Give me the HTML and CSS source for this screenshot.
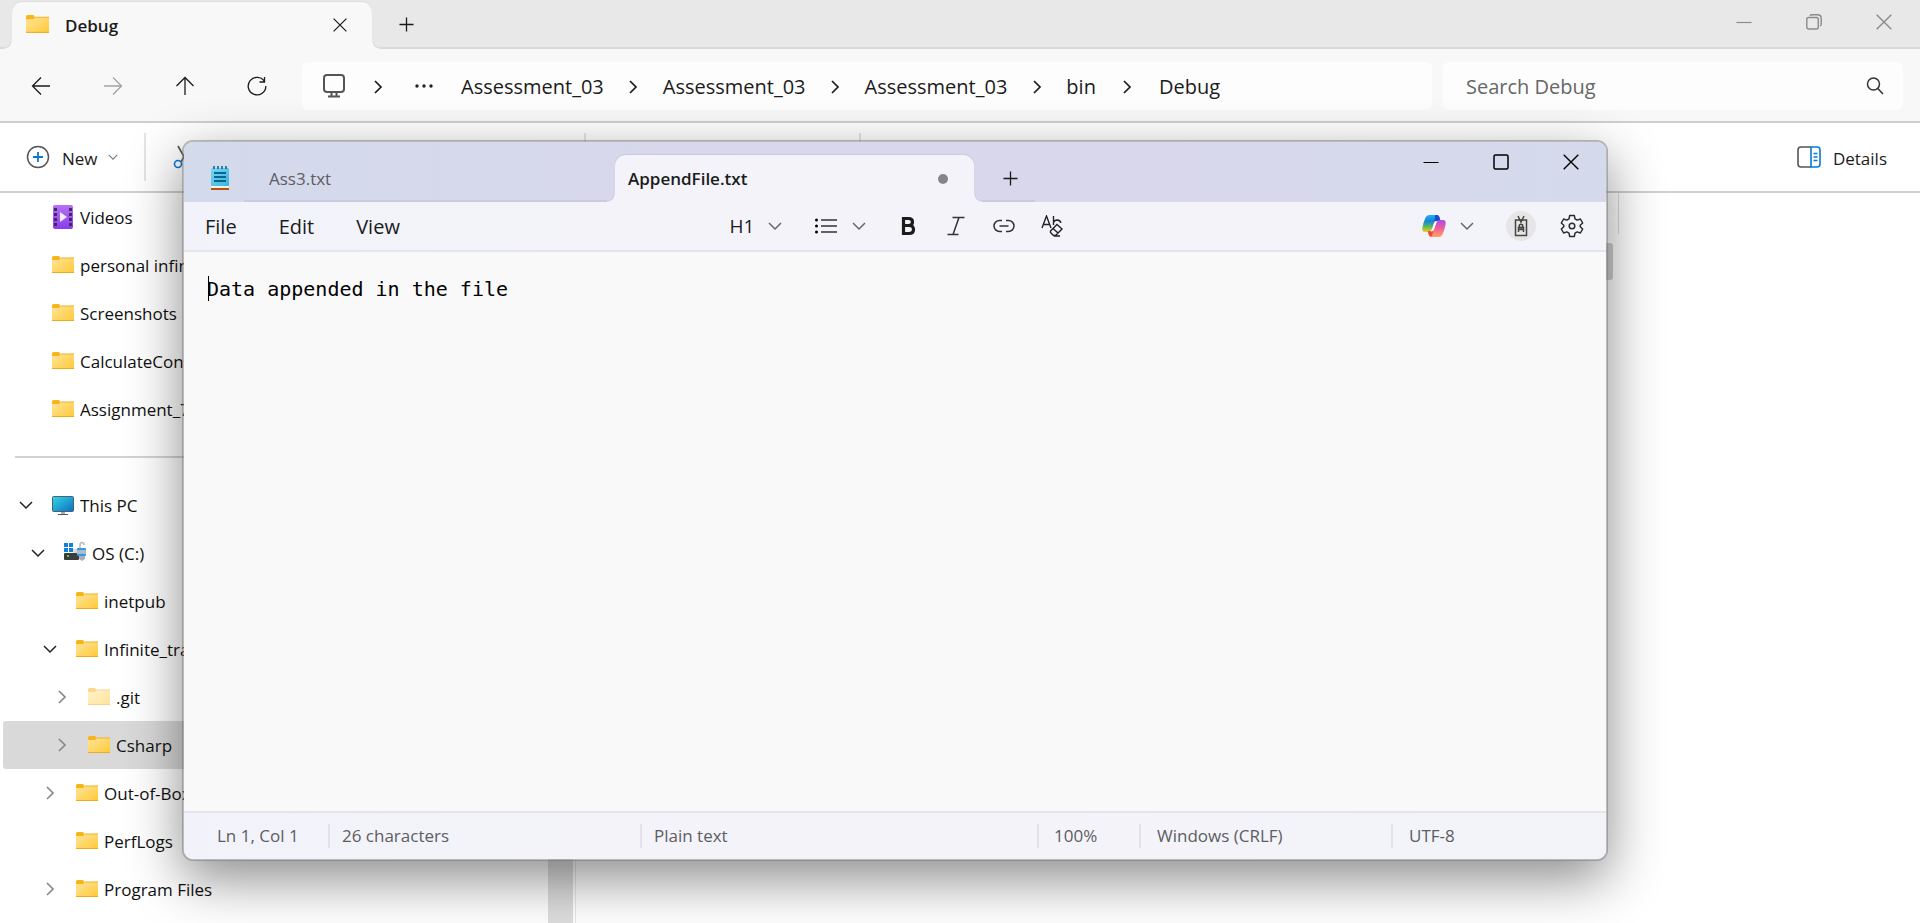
FILE: index.html
```html
<!DOCTYPE html>
<html lang="en">
<head>
<meta charset="utf-8">
<title>Debug</title>
<link rel="stylesheet" href="styles.css">
</head>
<body>
<svg class="defs" aria-hidden="true">
  <defs>
    <linearGradient id="folder-fill" x1="0" y1="0" x2="1" y2="1"><stop offset="0" stop-color="#ffe59a"/><stop offset="1" stop-color="#ffc937"/></linearGradient>
    <linearGradient id="video-fill" x1="0" y1="0" x2="0" y2="1"><stop offset="0" stop-color="#b573f3"/><stop offset="1" stop-color="#8a3ce8"/></linearGradient>
    <linearGradient id="screen-fill" x1="0" y1="0" x2="1" y2="1"><stop offset="0" stop-color="#35d6e4"/><stop offset="1" stop-color="#0a6fc2"/></linearGradient>
    <linearGradient id="pad-fill" x1="0" y1="0" x2="1" y2="1"><stop offset="0" stop-color="#7ad6f2"/><stop offset="1" stop-color="#3cb4dc"/></linearGradient>
    <linearGradient id="cop-a" x1="0" y1="0" x2="0" y2="1"><stop offset="0" stop-color="#1fb2f5"/><stop offset=".35" stop-color="#1483dc"/><stop offset=".65" stop-color="#4fb765"/><stop offset="1" stop-color="#f5cf12"/></linearGradient>
    <linearGradient id="cop-b" x1="0" y1="0" x2="0" y2="1"><stop offset="0" stop-color="#a64be8"/><stop offset=".5" stop-color="#f0609a"/><stop offset="1" stop-color="#ffa25c"/></linearGradient>
    <symbol id="folder" viewBox="0 0 22 18"><path d="M0 1.500Q0 0 1.500 0H7L8.500 2V5H0Z" fill="#f9b41c"/><path d="M0 4H7L9 2H21Q22 2 22 3V17H0Z" fill="url(#folder-fill)"/><path d="M9 1.500H22V2.500H8Z" fill="#efb02a"/><path d="M0 16H22V17H0Z" fill="#eda91f"/></symbol>
    <symbol id="down" viewBox="0 0 14 14"><path d="M1 4 7 10 13 4" fill="none" stroke="currentColor" stroke-width="1.500"/></symbol>
    <symbol id="right" viewBox="0 0 14 14"><path d="M4 1 10 7 4 13" fill="none" stroke="currentColor" stroke-width="1.700"/></symbol>
    <symbol id="cross" viewBox="0 0 16 16"><path d="M.7.7 15.300 15.300M15.300.7.7 15.300" fill="none" stroke="currentColor" stroke-width="1.400"/></symbol>
    <symbol id="plus" viewBox="0 0 16 16"><path d="M8 .5V15.500M.5 8H15.500" fill="none" stroke="currentColor" stroke-width="1.400"/></symbol>
    <symbol id="minus" viewBox="0 0 16 16"><path d="M.5 8.500H15.500" fill="none" stroke="currentColor" stroke-width="1.200"/></symbol>
  </defs>
</svg>

<div class="explorer">
  <header class="ex-tabs">
    <div class="ex-tab">
      <svg class="ex-tab-icon"><use href="#folder"/></svg>
      <span class="ex-tab-name">Debug</span>
      <button class="icon-btn small" aria-label="Close tab"><svg class="i14"><use href="#cross"/></svg></button>
    </div>
    <button class="icon-btn ex-add" aria-label="New tab"><svg class="i15"><use href="#plus"/></svg></button>
    <div class="ex-caption">
      <button class="icon-btn cap" aria-label="Minimize"><svg class="i16"><use href="#minus"/></svg></button>
      <button class="icon-btn cap" aria-label="Restore"><svg class="i16" viewBox="0 0 16 16" fill="none" stroke="currentColor" stroke-width="1.400"><rect x=".8" y="3.500" width="11.500" height="11.500" rx="2"/><path d="M4 1.800Q4.600.8 6 .8H11.500Q15.200.8 15.200 4.500V10Q15.200 11.500 14.200 12"/></svg></button>
      <button class="icon-btn cap" aria-label="Close"><svg class="i16"><use href="#cross"/></svg></button>
    </div>
  </header>

  <nav class="ex-nav" aria-label="Location">
    <div class="ex-moves">
      <button class="icon-btn move" aria-label="Back"><svg class="i20" viewBox="0 0 20 20"><path d="M19 10H1.500M10 1.500 1.500 10 10 18.500"/></svg></button>
      <button class="icon-btn move off" aria-label="Forward"><svg class="i20" viewBox="0 0 20 20"><path d="M1 10H18.500M10 1.500 18.500 10 10 18.500"/></svg></button>
      <button class="icon-btn move" aria-label="Up"><svg class="i20" viewBox="0 0 20 20"><path d="M10 19V1.500M1.500 10 10 1.500 18.500 10"/></svg></button>
      <button class="icon-btn move" aria-label="Refresh"><svg class="i20" viewBox="0 0 20 20"><path d="M17.500 5.500A8.800 8.800 0 1 0 18.800 10M17.500 1V6H12.500"/></svg></button>
    </div>
    <ol class="crumbs">
      <li><button class="icon-btn pc" aria-label="This device"><svg class="i24" viewBox="0 0 24 24" fill="none" stroke="#555" stroke-width="2"><rect x="2" y="1" width="20" height="17" rx="3"/><path d="M9.500 18V22M14.500 18V22M6 22.500H18"/></svg></button></li>
      <li class="sep wide"><svg class="i14"><use href="#right"/></svg></li>
      <li><button class="icon-btn more" aria-label="More"><svg class="dots" viewBox="0 0 18 4"><circle cx="2" cy="2" r="1.700"/><circle cx="9" cy="2" r="1.700"/><circle cx="16" cy="2" r="1.700"/></svg></button></li>
      <li><a href="#">Assessment_03</a></li>
      <li class="sep"><svg class="i14"><use href="#right"/></svg></li>
      <li><a href="#">Assessment_03</a></li>
      <li class="sep"><svg class="i14"><use href="#right"/></svg></li>
      <li><a href="#">Assessment_03</a></li>
      <li class="sep"><svg class="i14"><use href="#right"/></svg></li>
      <li><a href="#">bin</a></li>
      <li class="sep wide"><svg class="i14"><use href="#right"/></svg></li>
      <li><a href="#">Debug</a></li>
    </ol>
    <label class="search">
      <input type="search" placeholder="Search Debug" aria-label="Search Debug">
      <svg class="i18" viewBox="0 0 18 18" fill="none" stroke="#333" stroke-width="1.500"><circle cx="7.500" cy="7" r="6"/><path d="M11.800 11.500 17 17"/></svg>
    </label>
  </nav>

  <div class="ex-tools">
    <button class="tool-btn"><svg class="i24" viewBox="0 0 24 24" fill="none"><circle cx="12" cy="12" r="10.500" stroke="#555" stroke-width="1.500"/><path d="M12 7V17M7 12H17" stroke="#0a78d4" stroke-width="1.800"/></svg><span class="low">New</span><svg class="i10 faint"><use href="#down"/></svg></button>
    <span class="rule first"></span>
    <button class="icon-btn cut" aria-label="Cut"><svg class="i24" viewBox="0 0 24 24" fill="none" stroke-width="1.600"><path d="M6 1 15 17M18 1 9 17" stroke="#555"/><circle cx="6" cy="19" r="3.500" stroke="#0a78d4"/><circle cx="18" cy="19" r="3.500" stroke="#0a78d4"/></svg></button>
    <span class="rule second"></span>
    <span class="rule third"></span>
    <button class="tool-btn details"><svg class="i24" viewBox="0 0 24 24" fill="none" stroke-width="1.600"><path d="M14 2H4Q1 2 1 5V19Q1 22 4 22H14" stroke="#555"/><path d="M14 2H20Q23 2 23 5V19Q23 22 20 22H14ZM16.500 8.500H20.500M16.500 12H20.500M16.500 15.500H20.500" stroke="#0a78d4"/></svg><span class="low">Details</span></button>
  </div>

  <div class="ex-body">
    <aside class="side">
      <ul class="tree">
        <li class="row l0"><span class="arrow"></span><svg class="ico tall" viewBox="0 0 22 24"><rect x="1" width="20" height="24" rx="2" fill="url(#video-fill)"/><path d="M2 3h3v3H2zM2 8h3v3H2zM2 13h3v3H2zM2 18h3v3H2zM17 3h3v3h-3zM17 8h3v3h-3zM17 13h3v3h-3zM17 18h3v3h-3z" fill="#43266e"/><path d="M8 7V17L15 12Z" fill="#f4ecff"/></svg><span>Videos</span></li>
        <li class="row l0"><span class="arrow"></span><svg class="ico"><use href="#folder"/></svg><span>personal infinite</span></li>
        <li class="row l0"><span class="arrow"></span><svg class="ico"><use href="#folder"/></svg><span>Screenshots</span></li>
        <li class="row l0"><span class="arrow"></span><svg class="ico"><use href="#folder"/></svg><span>CalculateConc</span></li>
        <li class="row l0"><span class="arrow"></span><svg class="ico"><use href="#folder"/></svg><span>Assignment_7</span></li>
        <li class="split"></li>
        <li class="row l0"><span class="arrow open"><svg class="i14"><use href="#down"/></svg></span><svg class="ico tall" viewBox="0 0 22 24"><rect x=".5" y="3.500" width="21" height="15" rx="1" fill="url(#screen-fill)" stroke="#4a6272"/><path d="M9 19H13V21H9Z" fill="#a6b0b8"/><path d="M6 21H16V22H6Z" fill="#4c5964"/></svg><span>This PC</span></li>
        <li class="row l1"><span class="arrow open"><svg class="i14"><use href="#down"/></svg></span><svg class="ico tall" viewBox="0 0 22 24"><path d="M0 2h4v4H0zM5 2h4v4H5zM0 7h4v4H0zM5 7h4v4H5z" fill="#1182dc"/><path d="M9 8H14V12H9Z" fill="#d9dde0"/><rect y="12" width="15" height="7" rx="1" fill="#3c3c3c"/><rect x="3" y="14" width="2" height="2" fill="#2de02d"/><path d="M16 7V4Q16 1.500 18 1.500 20 1.500 20 4" fill="none" stroke="#b4bbc2" stroke-width="1.500"/><rect x="13" y="7" width="9" height="8" rx="1" fill="#3099e0"/><rect x="13" y="9" width="9" height="4" fill="#a9bccb"/><path d="M15 15H21V18L18 20 15 18Z" fill="#a8b1b9"/></svg><span>OS (C:)</span></li>
        <li class="row l2"><span class="arrow"></span><svg class="ico"><use href="#folder"/></svg><span>inetpub</span></li>
        <li class="row l2"><span class="arrow open"><svg class="i14"><use href="#down"/></svg></span><svg class="ico"><use href="#folder"/></svg><span>Infinite_trai</span></li>
        <li class="row l3"><span class="arrow"><svg class="i14"><use href="#right"/></svg></span><svg class="ico pale"><use href="#folder"/></svg><span>.git</span></li>
        <li class="row l3 picked"><span class="arrow"><svg class="i14"><use href="#right"/></svg></span><svg class="ico"><use href="#folder"/></svg><span>Csharp</span></li>
        <li class="row l2"><span class="arrow"><svg class="i14"><use href="#right"/></svg></span><svg class="ico"><use href="#folder"/></svg><span>Out-of-Box</span></li>
        <li class="row l2"><span class="arrow"></span><svg class="ico"><use href="#folder"/></svg><span>PerfLogs</span></li>
        <li class="row l2"><span class="arrow"><svg class="i14"><use href="#right"/></svg></span><svg class="ico"><use href="#folder"/></svg><span>Program Files</span></li>
      </ul>
      <div class="side-scroll"></div>
    </aside>
    <main class="files">
      <div class="columns"></div>
      <div class="file-picked"></div>
    </main>
  </div>
</div>

<section class="notepad" aria-label="Notepad">
  <header class="np-title">
    <div class="np-logo"><svg class="pad" viewBox="0 0 18 24"><path d="M0 22H18V24H0Z" fill="#b4530d"/><path d="M0 20H18V22H0Z" fill="#f5f0ea"/><rect y="2" width="18" height="18" rx="1" fill="url(#pad-fill)"/><path d="M3 0V3M7 0V3M11 0V3M15 0V3" stroke="#0c6a92" stroke-width="1.600"/><path d="M3 7H15M3 11H15M3 15H15" stroke="#05678f" stroke-width="2"/></svg></div>
    <div class="np-tabs">
      <button class="np-tab">Ass3.txt</button>
      <button class="np-tab on"><span>AppendFile.txt</span><i class="dot"></i></button>
      <button class="icon-btn np-add" aria-label="New tab"><svg class="i15"><use href="#plus"/></svg></button>
    </div>
    <div class="np-caption">
      <button class="icon-btn" aria-label="Minimize"><svg class="i16"><use href="#minus"/></svg></button>
      <button class="icon-btn" aria-label="Maximize"><svg class="i16" viewBox="0 0 16 16" fill="none" stroke="currentColor" stroke-width="1.500"><rect x="1" y="1" width="14" height="14" rx="1.500"/></svg></button>
      <button class="icon-btn" aria-label="Close"><svg class="i16"><use href="#cross"/></svg></button>
    </div>
  </header>

  <div class="np-menu">
    <div class="menus"><button>File</button><button>Edit</button><button>View</button></div>
    <div class="format">
      <button class="combo heading"><span>H1</span><svg class="i14 grey"><use href="#down"/></svg></button>
      <button class="combo list" aria-label="List"><svg class="i22" viewBox="0 0 22 22"><path d="M6 5H22M6 11H22M6 17H22" stroke="#333" stroke-width="1.400"/><circle cx="1.500" cy="5" r="1.500"/><circle cx="1.500" cy="11" r="1.500"/><circle cx="1.500" cy="17" r="1.500"/></svg><svg class="i14 grey"><use href="#down"/></svg></button>
      <button class="icon-btn fmt" aria-label="Bold"><svg class="i20" viewBox="0 0 20 20"><path d="M5.500 2.500H10.500Q14.500 2.500 14.500 6 14.500 9.500 10.500 9.500H5.500ZM5.500 9.500H11Q15.500 9.500 15.500 13.500 15.500 17.500 11 17.500H5.500Z" fill="none" stroke="#1b1b1b" stroke-width="3.200"/></svg></button>
      <button class="icon-btn fmt" aria-label="Italic"><svg class="i20" viewBox="0 0 20 20"><path d="M6.500 1.500H18.500M1.500 18.500H12.500M13 1.500 7 18.500" fill="none" stroke="#333" stroke-width="1.500"/></svg></button>
      <button class="icon-btn fmt" aria-label="Link"><svg class="i22" viewBox="0 0 22 22"><path d="M9 5.500H6.500A5.500 5.500 0 0 0 6.500 16.500H9M13 5.500H15.500A5.500 5.500 0 0 1 15.500 16.500H13M6.500 11H15.500" fill="none" stroke="#333" stroke-width="1.500"/></svg></button>
      <button class="icon-btn fmt" aria-label="Clear formatting"><svg class="i22" viewBox="0 0 22 22"><path d="M1 13 5.500 1 10 13M2.500 9.500H8.500M12.500 1V10M12.500 7.500Q13.500 5 16 5 19.500 5.200 19.800 8M9.500 16 16 9.500 21 14 14.500 20.500H12.500L9.500 17.500ZM12 13.500 17 18M13 21H19" fill="none" stroke="#222" stroke-width="1.400"/></svg></button>
    </div>
    <div class="extras">
      <button class="combo copilot" aria-label="Copilot"><svg class="i24" viewBox="0 0 24 24"><path d="M7 1H14.500Q17 1 17.500 4L18 7H14.500Q12.500 7 12 9L9.500 16.500Q8.700 18 7 18H3Q0 18 .3 14.500Q1 9 3.500 3.500 4.800 1 7 1Z" fill="url(#cop-a)"/><path d="M13 1H15Q17 1 17.600 3.500L18.500 7H15Q13.500 7 12.500 9Z" fill="#2048cc"/><path d="M17 23H9.500Q7 23 6.500 20L6 17H9.500Q11.500 17 12 15L14.500 7.500Q15.300 6 17 6H21Q24 6 23.700 9.500 23 15 20.500 20.500 19.200 23 17 23Z" fill="url(#cop-b)"/><path d="M6 17H9.500Q11 17 11.800 15.500L9.500 22.800Q7 22.500 6.500 20Z" fill="#ee4a35"/><path d="M12.500 8Q13 7 15.500 7 14 9 11.500 16.500 11 17.500 8.500 17.500 10.500 15.500 12.500 8Z" fill="#fff"/></svg><svg class="i14 grey"><use href="#down"/></svg></button>
      <button class="icon-btn avatar" aria-label="Account"><svg class="i22" viewBox="0 0 22 22" fill="none" stroke="#444" stroke-width="1.500"><rect x="5.500" y="5" width="11" height="15.500"/><path d="M8 1 11 7 14 1M8.500 17V12.500H13.500V17M8.500 14.500H13.500"/><circle cx="11" cy="11" r="1.800"/></svg></button>
      <button class="icon-btn gear" aria-label="Settings"><svg class="i24" viewBox="0 0 24 24" fill="none" stroke="#2b2b2b" stroke-width="1.500" stroke-linejoin="round"><path d="M9.700 1.500H14.300L15 4.800 17.200 6.100 20.400 5 22.700 9 20.200 11.200V12.800L22.700 15 20.400 19 17.200 17.900 15 19.200 14.300 22.500H9.700L9 19.200 6.800 17.900 3.600 19 1.300 15 3.800 12.800V11.200L1.300 9 3.600 5 6.800 6.100 9 4.800Z"/><circle cx="12" cy="12" r="2.800"/></svg></button>
    </div>
  </div>

  <div class="np-edit">
    <textarea aria-label="Text editor" spellcheck="false">Data appended in the file</textarea>
    <span class="caret"></span>
  </div>

  <footer class="np-status">
    <span class="st pos">Ln 1, Col 1</span>
    <span class="st chars">26 characters</span>
    <span class="st kind">Plain text</span>
    <span class="st zoom">100%</span>
    <span class="st eol">Windows (CRLF)</span>
    <span class="st enc">UTF-8</span>
  </footer>
</section>
</body>
</html>
```
FILE: styles.css
```css
* { box-sizing: border-box; }
body {
  margin: 0;
  height: 100vh;
  overflow: hidden;
  background: #fff;
  color: #1b1b1b;
  font: 17px/24px "Open Sans", "Noto Sans", sans-serif;
}
button {
  margin: 0;
  padding: 0;
  border: 0;
  background: none;
  color: inherit;
  font: inherit;
}
a { color: inherit; text-decoration: none; }
ol, ul { margin: 0; padding: 0; list-style: none; }
svg { display: block; flex: none; }
.defs { position: absolute; width: 0; height: 0; }
.i10 { width: 10px; height: 10px; }
.i14 { width: 14px; height: 14px; }
.i15 { width: 15px; height: 15px; }
.i16 { width: 16px; height: 16px; }
.i18 { width: 18px; height: 18px; }
.i20 { width: 20px; height: 20px; }
.i22 { width: 22px; height: 22px; }
.i24 { width: 24px; height: 24px; }
.icon-btn { display: flex; align-items: center; justify-content: center; flex: none; }
.grey { color: #666; }
.faint { color: #777; }

/* Explorer */
.explorer { display: flex; flex-direction: column; height: 100%; }
.ex-tabs {
  display: flex;
  height: 49px;
  padding: 2px 1px 0 12px;
  background: #e8e8e8;
  border-bottom: 2px solid #d9d9d9;
}
.ex-tab {
  position: relative;
  display: flex;
  align-items: center;
  width: 360px;
  height: 47px;
  padding: 0 20px 2px 14px;
  background: #f8f8f8;
  border-radius: 10px 10px 0 0;
  box-shadow: 0 -1px 1px #ddd;
}
.ex-tab::before, .ex-tab::after, .np-tab.on::before, .np-tab.on::after {
  content: "";
  position: absolute;
  bottom: 0;
  width: 8px;
  height: 8px;
}
.ex-tab::before { right: 100%; background: radial-gradient(circle at 0 0, #e8e8e8 6px, #d9d9d9 7px, #f8f8f8 8px); }
.ex-tab::after { left: 100%; background: radial-gradient(circle at 100% 0, #e8e8e8 6px, #d9d9d9 7px, #f8f8f8 8px); }
.ex-tab-icon { width: 23px; height: 19px; }
.ex-tab-name { flex: 1; padding: 2px 0 0 16px; font-size: 17px; font-weight: 600; }
.small { width: 24px; height: 24px; }
.ex-add { width: 68px; }
.ex-caption { display: flex; margin-left: auto; color: #8a8a8a; }
.cap { width: 70px; height: 39px; }

.ex-nav {
  display: flex;
  align-items: center;
  height: 74px;
  padding: 2px 17px 0 5px;
  background: #f8f8f8;
  border-bottom: 2px solid #cfcfcf;
}
.ex-moves { display: flex; padding-right: 9px; }
.move { width: 72px; height: 48px; }
.move svg { fill: none; stroke: #1b1b1b; stroke-width: 1.300; }
.off svg { stroke: #a3a3a3; }
.crumbs {
  display: flex;
  align-items: center;
  flex: 1;
  height: 48px;
  margin-right: 11px;
  padding-left: 20px;
  background: #fdfdfd;
  border-radius: 6px;
  font-size: 20px;
}
.crumbs a { display: block; padding-top: 2px; }
.sep { display: flex; justify-content: center; width: 59px; padding: 2px 0 0; }
.wide { width: 63px; }
.more { padding: 0 28px 0 6px; }
.dots { width: 18px; height: 4px; fill: #222; }
.search {
  display: flex;
  align-items: center;
  width: 460px;
  height: 48px;
  padding: 0 19px 0 23px;
  background: #fdfdfd;
  border-radius: 6px;
}
.search input {
  flex: 1;
  min-width: 0;
  padding: 2px 0 0;
  border: 0;
  outline: 0;
  background: none;
  font: inherit;
  font-size: 20px;
}
.search input::placeholder { color: #666; opacity: 1; }

.ex-tools {
  display: flex;
  align-items: center;
  height: 70px;
  padding: 0 33px 0 26px;
  background: #fff;
  border-bottom: 2px solid #cfcfcf;
}
.tool-btn { display: flex; align-items: center; gap: 12px; height: 40px; }
.tool-btn .i10 { margin-left: -2px; }
.low { padding-top: 3px; }
.rule { width: 2px; height: 48px; background: #e4e4e4; }
.first { margin: 0 26px; }
.second { margin-left: 388px; }
.third { margin-left: 273px; }
.details { margin-left: auto; }

.ex-body { display: flex; flex: 1; min-height: 0; }
.side { display: flex; width: 576px; border-right: 1px solid #e8e8e8; padding-right: 2px; }
.tree { flex: 1; padding-left: 3px; overflow: hidden; font-size: 17px; color: #111; }
.row { display: flex; align-items: center; height: 48px; white-space: nowrap; border-radius: 3px; }
.row > span:last-child { padding: 2px 0 0 6px; }
.l0 { padding-left: 14px; }
.l1 { padding-left: 26px; }
.l2 { padding-left: 38px; }
.l3 { padding-left: 50px; }
.arrow { width: 35px; padding-left: 2px; color: #888; }
.open { color: #222; }
.ico { width: 22px; height: 18px; }
.tall { height: 24px; }
.pale { opacity: .5; }
.split { display: flex; align-items: center; height: 48px; padding-left: 12px; }
.split::before { content: ""; flex: 1; height: 2px; background: #d3d3d3; }
.picked { background: #d9d9d9; }
.side-scroll { width: 25px; background: #dedede; }
.files { flex: 1; }
.columns { width: 1043px; height: 41px; border-right: 1px solid #dcdcdc; }
.file-picked { width: 1037px; height: 37px; margin-top: 9px; background: #cfcfcf; border-radius: 3px; }

/* Notepad */
.notepad {
  position: absolute;
  top: 140px;
  right: 312px;
  bottom: 62px;
  left: 182px;
  display: flex;
  flex-direction: column;
  overflow: hidden;
  background: #f9f9f9;
  background-clip: padding-box;
  border: 2px solid rgba(120, 120, 120, .5);
  border-radius: 11px;
  box-shadow: 0 18px 54px rgba(0, 0, 0, .46);
}
.np-title {
  display: flex;
  height: 60px;
  background: linear-gradient(90deg, #d3daec, #d9d7eb 40%, #d9d7eb 65%, #d4daec);
}
.np-logo { width: 60px; padding: 24px 0 0 27px; }
.pad { width: 18px; height: 24px; }
.np-tabs { display: flex; align-items: flex-end; border-bottom: 2px solid #cbcbdf; }
.np-tab { height: 47px; margin-bottom: -2px; padding-left: 25px; width: 371px; text-align: left; color: #5c5c64; }
.np-tab.on {
  position: relative;
  display: flex;
  align-items: center;
  justify-content: space-between;
  width: 359px;
  padding: 0 26px 0 13px;
  background: #f3f3f9;
  border-radius: 11px 11px 0 0;
  box-shadow: 0 -1px 1px #c8c8dd;
  color: #1b1b1b;
  font-weight: 600;
}
.np-tab.on::before { right: 100%; background: radial-gradient(circle at 0 0, #d7d8eb 6px, #cbcbdf 7px, #f3f3f9 8px); }
.np-tab.on::after { left: 100%; background: radial-gradient(circle at 100% 0, #d9d7eb 6px, #cbcbdf 7px, #f3f3f9 8px); }
.dot { width: 10px; height: 10px; border-radius: 50%; background: #858589; }
.np-add { width: 61px; height: 43px; padding-left: 12px; }
.np-caption { display: flex; margin-left: auto; color: #000; }
.np-caption .icon-btn { width: 70px; height: 40px; }

.np-menu {
  display: grid;
  grid-template-columns: 1fr auto 1fr;
  align-items: center;
  height: 50px;
  background: linear-gradient(90deg, #f2f3fa, #f4f3f9 50%, #f3f3fa);
  border-bottom: 2px solid #e4e4ea;
}
.menus { display: flex; gap: 42px; padding: 2px 0 0 21px; font-size: 20px; }
.format { display: flex; align-items: center; padding-left: 16px; }
.combo { display: flex; align-items: center; gap: 14px; font-size: 19px; }
.heading { margin-right: 33px; }
.list { gap: 15px; margin-right: 18px; }
.fmt { width: 48px; height: 36px; }
.extras { display: flex; align-items: center; justify-content: flex-end; padding-right: 22px; }
.copilot { margin-right: 32px; }
.avatar { width: 30px; height: 30px; margin-right: 24px; border-radius: 50%; background: #e6e6e6; }

.np-edit { position: relative; flex: 1; display: flex; }
.np-edit textarea {
  flex: 1;
  padding: 24px 23px;
  border: 0;
  outline: 0;
  resize: none;
  background: #f9f9f9;
  color: #000;
  font: 20px/26px "DejaVu Sans Mono", monospace;
}
.caret { position: absolute; top: 24px; left: 24px; width: 1px; height: 25px; background: #000; }

.np-status {
  display: flex;
  align-items: center;
  height: 48px;
  background: linear-gradient(90deg, #f2f3fa, #f4f3f9 50%, #f2f4fa);
  border-top: 2px solid #e4e4ea;
  color: #5d5d61;
  font-size: 17px;
}
.st + .st { border-left: 2px solid #e2e2e8; }
.pos { width: 144px; padding-left: 33px; }
.chars { width: 312px; padding-left: 12px; }
.kind { flex: 1; padding-left: 12px; }
.zoom { width: 102px; padding-left: 15px; }
.eol { width: 252px; padding-left: 16px; }
.enc { width: 215px; padding-left: 16px; }
```
